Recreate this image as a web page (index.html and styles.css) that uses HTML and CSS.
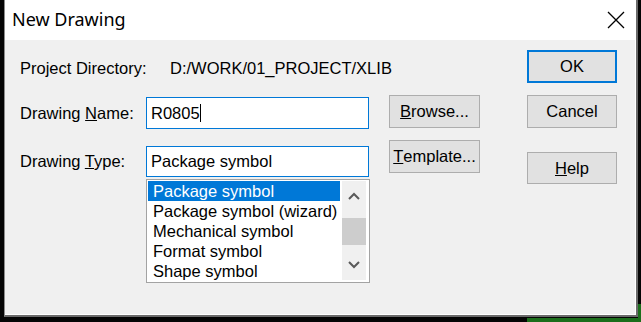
FILE: index.html
```html
<!DOCTYPE html>
<html>
<head>
<meta charset="utf-8">
<title>New Drawing</title>
<link rel="stylesheet" href="styles.css">
</head>
<body>
<div class="window">
  <div class="titlebar">
    <span class="title">New Drawing</span>
    <span class="close">
      <svg width="18" height="18" viewBox="0 0 18 18"><path d="M1 1 L17 17 M17 1 L1 17" stroke="#000" stroke-width="1.3" fill="none"/></svg>
    </span>
  </div>
  <div class="content">
    <div class="col-main">
      <div class="row-dir">
        <span class="label-dir">Project Directory:</span>
        <span class="value">D:/WORK/01_PROJECT/XLIB</span>
      </div>
      <div class="row-field row-name">
        <span class="label">Drawing <u>N</u>ame:</span>
        <div class="input">R0805<span class="caret"></span></div>
      </div>
      <div class="row-field row-type">
        <span class="label">Drawing <u>T</u>ype:</span>
        <div class="input">Package symbol</div>
      </div>
      <div class="listbox">
        <div class="items">
          <div class="item selected">Package symbol</div>
          <div class="item">Package symbol (wizard)</div>
          <div class="item">Mechanical symbol</div>
          <div class="item">Format symbol</div>
          <div class="item">Shape symbol</div>
        </div>
        <div class="scrollbar">
          <div class="sb-btn">
            <svg width="12" height="8" viewBox="0 0 12 8"><path d="M1 7 L6 2 L11 7" stroke="#5a5a5a" stroke-width="2" fill="none"/></svg>
          </div>
          <div class="sb-track"><div class="sb-thumb"></div></div>
          <div class="sb-btn">
            <svg width="12" height="8" viewBox="0 0 12 8"><path d="M1 1 L6 6 L11 1" stroke="#5a5a5a" stroke-width="2" fill="none"/></svg>
          </div>
        </div>
      </div>
    </div>
    <div class="col-mid">
      <div class="btn"><u>B</u>rowse...</div>
      <div class="btn btn-template"><u>T</u>emplate...</div>
    </div>
    <div class="col-right">
      <div class="btn btn-default">OK</div>
      <div class="btn btn-cancel">Cancel</div>
      <div class="btn btn-help"><u>H</u>elp</div>
    </div>
  </div>
</div>
</body>
</html>
```

FILE: styles.css
```css
html {
  background:
    linear-gradient(#1b6e1b, #1b6e1b) no-repeat right bottom / 114px 4px,
    linear-gradient(#1b6e1b, #1b6e1b) no-repeat right bottom / 3px 18px,
    #050505;
  height: 100%;
}
body {
  margin: 0;
  font-family: "Liberation Sans", Arial, sans-serif;
  font-size: 16.5px;
  color: #000;
}
.window {
  margin-left: 4px;
  width: 634px;
  height: 317px;
  box-sizing: border-box;
  border-left: 1px solid #8c8c8c;
  border-right: 2px solid #6a6a6a;
  border-bottom: 2px solid #6a6a6a;
  background: #f0f0f0;
  display: flex;
  flex-direction: column;
}
.titlebar {
  height: 40px;
  background: #fff;
  display: flex;
  align-items: center;
  justify-content: space-between;
  padding-left: 7px;
  padding-right: 11px;
}
.title {
  font-family: "Noto Sans", "Open Sans", sans-serif;
  font-size: 18px;
  line-height: 40px;
  margin-top: -2px;
}
.close {
  display: flex;
  width: 18px;
  height: 18px;
}
.content {
  flex: 1;
  display: flex;
  padding-left: 15px;
  box-shadow: inset -1px -1px 0 #fff;
}
.col-main {
  width: 349px;
  flex-shrink: 0;
  display: flex;
  flex-direction: column;
}
.row-dir {
  margin-top: 18px;
  line-height: 20px;
  display: flex;
  white-space: nowrap;
}
.label-dir {
  width: 150px;
  flex-shrink: 0;
}
.value {
  flex-shrink: 0;
}
.row-field {
  display: flex;
  align-items: center;
}
.row-name {
  margin-top: 19px;
}
.row-type {
  margin-top: 17px;
}
.label {
  width: 126px;
  flex-shrink: 0;
}
.input {
  width: 223px;
  height: 32px;
  box-sizing: border-box;
  border: 1px solid #0078d7;
  background: #fff;
  padding-left: 4px;
  display: flex;
  align-items: center;
}
.row-type .input {
  height: 31px;
}
.caret {
  display: inline-block;
  width: 1px;
  height: 18px;
  background: #000;
}
.listbox {
  margin-top: 2px;
  margin-left: 126px;
  width: 224px;
  height: 104px;
  box-sizing: border-box;
  border: 1px solid #a3a3a3;
  background: #fff;
  display: flex;
  padding: 1px 3px 2px 1px;
  overflow: hidden;
}
.items {
  flex: 1;
  overflow: hidden;
}
.item {
  height: 20px;
  line-height: 20px;
  padding-left: 5px;
  white-space: nowrap;
}
.item.selected {
  background: #0078d7;
  color: #fff;
}
.scrollbar {
  width: 24px;
  margin-left: 2px;
  background: #f0f0f0;
  display: flex;
  flex-direction: column;
}
.sb-btn {
  height: 30px;
  display: flex;
  align-items: center;
  justify-content: center;
}
.sb-track {
  flex: 1;
}
.sb-thumb {
  margin-top: 7px;
  height: 27px;
  background: #cdcdcd;
}
.col-mid {
  width: 91px;
  flex-shrink: 0;
  margin-left: 20px;
  display: flex;
  flex-direction: column;
  padding-top: 55px;
}
.col-right {
  width: 90px;
  flex-shrink: 0;
  margin-left: 47px;
  display: flex;
  flex-direction: column;
  padding-top: 10px;
}
.btn {
  height: 33px;
  box-sizing: border-box;
  border: 1px solid #adadad;
  background: #e1e1e1;
  display: flex;
  align-items: center;
  justify-content: center;
}
.btn-template {
  margin-top: 12px;
}
.btn-default {
  border: 2px solid #0078d7;
}
.btn-cancel {
  margin-top: 12px;
}
.btn-help {
  margin-top: 24px;
  height: 32px;
}
```
